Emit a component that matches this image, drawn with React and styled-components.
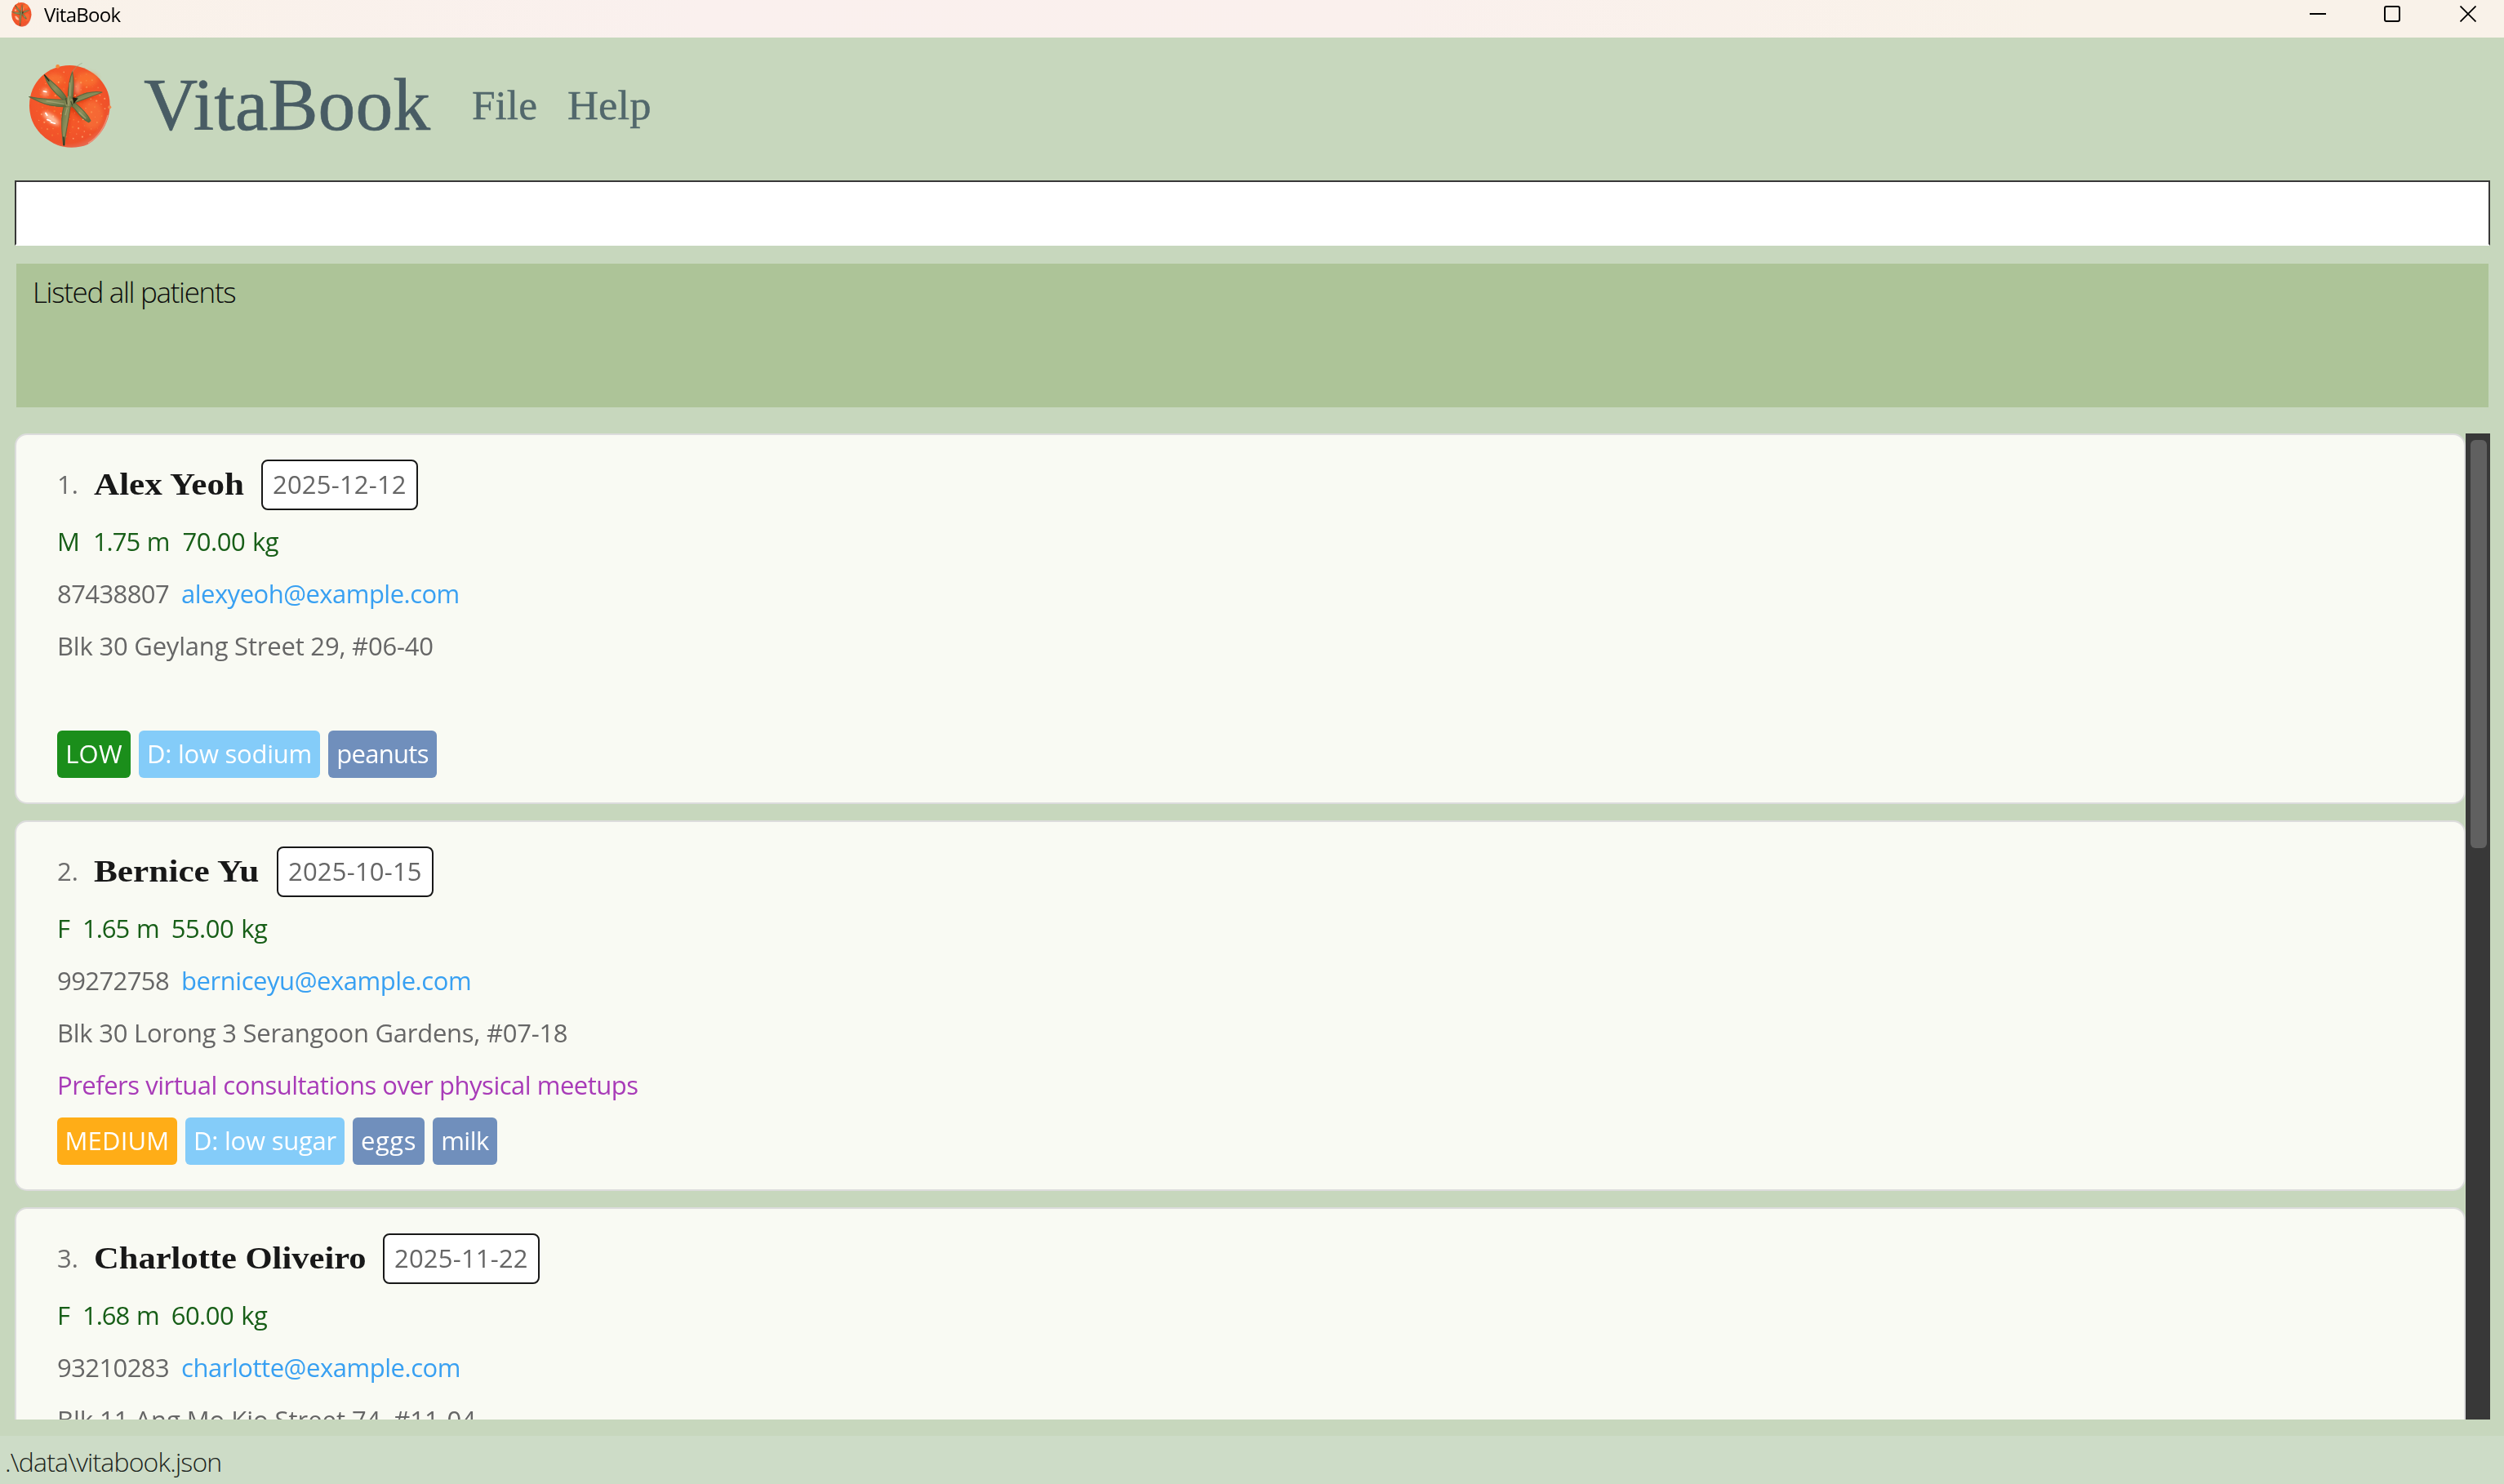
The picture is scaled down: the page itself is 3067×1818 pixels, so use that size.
import React from "react";
import styled, { createGlobalStyle } from "styled-components";

const GlobalStyle = createGlobalStyle`
  * { box-sizing: border-box; }
  body { margin: 0; background: #c7d7bd; overflow: hidden; }
`;

const sans = `"Open Sans", "Noto Sans", sans-serif`;
const serif = `"Liberation Serif", serif`;

const Window = styled.div`
  width: 3067px;
  height: 1818px;
  display: flex;
  flex-direction: column;
  background: #c7d7bd;
  font-family: ${sans};
  overflow: hidden;
`;

const TitleBar = styled.div`
  height: 46px;
  flex: none;
  display: flex;
  align-items: flex-start;
  padding: 2px 34px 0 14px;
  background: linear-gradient(90deg, #f9f2e9 0%, #faf0ee 28%, #faf0ed 55%, #f9f2e9 82%);
`;

const WindowTitle = styled.div`
  flex: 1;
  margin-left: 15px;
  font-size: 24px;
  line-height: 32px;
  letter-spacing: -0.75px;
  color: #000;
`;

const WindowButtons = styled.div`
  display: flex;
  gap: 71px;
  margin-top: 5px;
  svg { display: block; width: 20px; height: 20px; }
  svg:last-child { margin-left: 2px; }
`;

const MenuBar = styled.div`
  height: 166px;
  flex: none;
  margin-bottom: 9px;
  padding-left: 35px;
  display: flex;
  align-items: center;
  font-family: ${serif};
`;

const Stretched = styled.span`
  display: inline-block;
  transform: scaleX(${(p) => p.$by});
  transform-origin: left;
  white-space: nowrap;
`;

const Brand = styled.div`
  width: 402px;
  margin-left: 39px;
  font-size: 90px;
  line-height: 100px;
  color: #485c64;
  -webkit-text-stroke: 0.6px #485c64;
`;

const MenuItem = styled.div`
  width: ${(p) => p.$width}px;
  font-size: 50px;
  line-height: 60px;
  color: #52686c;
  -webkit-text-stroke: 0.4px #52686c;
`;

const CommandInput = styled.div`
  height: 80px;
  flex: none;
  margin: 0 17px 0 18px;
  background: #fff;
  border: 2px solid #383838;
  border-bottom-color: #fff;
`;

const ResultBox = styled.div`
  height: 176px;
  flex: none;
  margin: 22px 19px 32px 20px;
  padding: 9px 20px;
  background: #adc498;
  color: #0c0c0c;
  font-size: 35px;
  font-weight: 300;
  line-height: 51px;
  letter-spacing: -1.32px;
`;

const ListPane = styled.div`
  height: 1208px;
  flex: none;
  margin: 0 17px 20px 18px;
  display: flex;
  overflow: hidden;
`;

const Cards = styled.div`
  flex: 1;
  display: flex;
  flex-direction: column;
  gap: 20px;
`;

const ScrollTrack = styled.div`
  width: 30px;
  padding: 8px 4px 0 6px;
  background: #383838;
`;

const ScrollThumb = styled.div`
  height: 500px;
  border-radius: 6px;
  background: #606060;
`;

const Card = styled.div`
  height: 454px;
  flex: none;
  padding: 30px 50px;
  border: 2px solid #dcdcdc;
  border-radius: 15px;
  background: #f9faf3;
`;

const CardHeader = styled.div`
  height: 62px;
  margin-bottom: 6px;
  display: flex;
`;

const Index = styled.div`
  width: 45px;
  font-size: 31px;
  line-height: 60px;
  color: #6c6c6c;
`;

const Name = styled.div`
  width: ${(p) => p.$width}px;
  font-family: ${serif};
  font-size: 37px;
  font-weight: 700;
  line-height: 61px;
  color: #181818;
`;

const DateBox = styled.div`
  width: 192px;
  height: 62px;
  padding-left: 12px;
  border: 2px solid #181818;
  border-radius: 8px;
  background: #fff;
  font-size: 31px;
  line-height: 56px;
  letter-spacing: 0.2px;
  color: #666;
`;

const Line = styled.div`
  height: 64px;
  display: flex;
  gap: ${(p) => p.$gap || 15}px;
  font-size: 31px;
  line-height: 64px;
  white-space: pre;
  color: ${(p) => p.$color};
`;

const Text = styled.span`
  letter-spacing: ${(p) => p.$ls || 0}px;
  word-spacing: ${(p) => p.$ws || 0}px;
  color: ${(p) => p.$color || "inherit"};
`;

const Tags = styled.div`
  margin-top: 8px;
  display: flex;
  gap: 10px;
`;

const tagColors = { low: "#1b8e1b", medium: "#ffad17", diet: "#84ccf9", allergy: "#708fbc" };

const Tag = styled.div`
  width: ${(p) => p.$width}px;
  height: 58px;
  border-radius: 6px;
  background: ${(p) => tagColors[p.$kind]};
  color: #fff;
  font-size: 31px;
  line-height: 56px;
  text-align: center;
  white-space: nowrap;
  letter-spacing: ${(p) => p.$ls}px;
`;

const StatusBar = styled.div`
  flex: 1;
  padding-left: 6px;
  background: #cddcc7;
  color: #1c241c;
  font-size: 32px;
  font-weight: 300;
  line-height: 64px;
  letter-spacing: -0.84px;
`;

const Logo = styled.svg`
  display: block;
  flex: none;
  width: ${(p) => p.$w}px;
  height: ${(p) => p.$h}px;
`;

const speckles = Array.from({ length: 110 }, (_, i) => {
  const a = i * 2.39996 + (i % 7) * 0.3;
  const r = 12.6 * Math.sqrt(i + 0.5);
  return [197 + Math.cos(a) * r, 207 + Math.sin(a) * r, 0.8 + ((i * 7) % 5) * 0.5, i % 3];
});

function Tomato({ w, h, id }) {
  return (
    <Logo $w={w} $h={h} viewBox="45 48 306 314" preserveAspectRatio="none">
      <defs>
        <radialGradient id={`${id}-skin`} cx="0.45" cy="0.42" r="0.6">
          <stop offset="0" stopColor="#f65a24" />
          <stop offset="0.6" stopColor="#f4572a" />
          <stop offset="0.88" stopColor="#ef512a" />
          <stop offset="1" stopColor="#e86a50" />
        </radialGradient>
        <linearGradient id={`${id}-leaf`} x1="0" y1="0" x2="1" y2="1">
          <stop offset="0" stopColor="#66703f" />
          <stop offset="0.5" stopColor="#8d8f5c" />
          <stop offset="1" stopColor="#55673b" />
        </linearGradient>
        <filter id={`${id}-soft`} x="-50%" y="-50%" width="200%" height="200%">
          <feGaussianBlur stdDeviation="6" />
        </filter>
      </defs>
      <path d="M196 57 C262 57 344 112 344 202 C344 260 312 318 262 347 C228 362 178 362 148 348 C84 318 48 268 48 204 C48 118 116 57 196 57Z" fill={`url(#${id}-skin)`} />
      <path d="M336 240 C326 284 298 322 264 342" fill="none" stroke="#f0a088" strokeWidth="4" opacity="0.8" />
      <circle cx="152" cy="61" r="7" fill="#f28a3c" />
      <circle cx="343" cy="210" r="6" fill="#f28a4c" />
      <g filter={`url(#${id}-soft)`}>
        <ellipse cx="140" cy="108" rx="34" ry="20" fill="#fa7d38" opacity="0.6" />
        <ellipse cx="260" cy="108" rx="40" ry="26" fill="#fb7d33" opacity="0.6" />
        <ellipse cx="225" cy="140" rx="7" ry="22" fill="#ffb59a" opacity="0.7" />
        <ellipse cx="128" cy="252" rx="36" ry="13" transform="rotate(38 128 252)" fill="#ffd2b4" opacity="0.85" />
        <ellipse cx="106" cy="156" rx="12" ry="15" fill="#ffb692" opacity="0.8" />
        <ellipse cx="280" cy="240" rx="38" ry="52" fill="#fb8042" opacity="0.45" />
        <path d="M180 206 L180 345 L198 220 L262 268 L218 200 L300 167 L222 168 L212 90 L186 165Z" fill="#c92306" opacity="0.6" />
      </g>
      {speckles.map(([x, y, r, k], i) => (
        <circle key={i} cx={x} cy={y} r={r + 0.6} fill={["#f9a05a", "#f6853c", "#ffc48a"][k]} opacity="0.6" />
      ))}
      <path d="M114 256 l12 5 M128 266 l14 4 M108 232 l5 8 M100 152 l10 2" stroke="#fff" strokeWidth="5" strokeLinecap="round" />
      <g fill={`url(#${id}-leaf)`} stroke="#5c6840" strokeWidth="3" strokeLinejoin="round">
        <path d="M188 184 C172 150 142 128 103 92 C112 126 139 158 175 186Z" />
        <path d="M190 178 C191 145 193 112 206 80 C211 110 211 146 206 180Z" />
        <path d="M208 197 C232 186 278 171 315 156 C278 150 236 161 213 182Z" />
        <path d="M200 204 C220 214 227 245 266 266 L273 260 C262 234 236 212 212 192Z" />
        <path d="M176 205 C162 250 166 300 173 350 L177 350 C180 305 193 255 198 208Z" />
        <path d="M182 183 C150 184 90 180 47 172 C78 188 112 208 182 209Z" />
        <circle cx="194" cy="193" r="17" stroke="none" />
      </g>
      <path d="M208 175 L227 178 L210 199Z" fill="#1c1d10" />
      <path d="M206 82 C212 68 225 57 242 49" fill="none" stroke="#8fa582" strokeWidth="2" />
      <path d="M104 93 L120 114 M174 320 L175 349" stroke="#22261a" strokeWidth="4" strokeLinecap="round" />
      <path d="M110 188 L176 199 M190 170 L193 206 M180 240 L187 212 M196 120 L198 170 M230 228 L256 252" stroke="#b5b184" strokeWidth="4" opacity="0.6" />
      <path d="M182 178 L186 200 M200 188 L206 204" stroke="#34361f" strokeWidth="4" opacity="0.7" />
    </Logo>
  );
}

const patients = [
  {
    name: "Alex Yeoh", nameWidth: 205, nameScale: 1.165, date: "2025-12-12",
    sex: "M", height: "1.75 m", weight: "70.00 kg",
    phone: "87438807", email: "alexyeoh@example.com", emailLs: -0.52,
    address: "Blk 30 Geylang Street 29, #06-40", addressLs: -0.2,
    tags: [["LOW", "low", 90, 0.2], ["D: low sodium", "diet", 222, -0.23], ["peanuts", "allergy", 133, -0.7]],
  },
  {
    name: "Bernice Yu", nameWidth: 224, nameScale: 1.17, date: "2025-10-15",
    sex: "F", height: "1.65 m", weight: "55.00 kg",
    phone: "99272758", email: "berniceyu@example.com", emailLs: -0.45,
    address: "Blk 30 Lorong 3 Serangoon Gardens, #07-18", addressLs: -0.25,
    note: "Prefers virtual consultations over physical meetups",
    tags: [["MEDIUM", "medium", 147, 0.2], ["D: low sugar", "diet", 195, -0.23], ["eggs", "allergy", 88, 0.5], ["milk", "allergy", 79, -0.5]],
  },
  {
    name: "Charlotte Oliveiro", nameWidth: 354, nameScale: 1.15, date: "2025-11-22",
    sex: "F", height: "1.68 m", weight: "60.00 kg",
    phone: "93210283", email: "charlotte@example.com", emailLs: -0.46,
    address: "Blk 11 Ang Mo Kio Street 74, #11-04", addressLs: -0.04,
    tags: [],
  },
];

function PatientCard({ index, p }) {
  return (
    <Card>
      <CardHeader>
        <Index>{index}.</Index>
        <Name $width={p.nameWidth}><Stretched $by={p.nameScale}>{p.name}</Stretched></Name>
        <DateBox>{p.date}</DateBox>
      </CardHeader>
      <Line $color="#175e17" $gap={p.sex === "M" ? 16 : 15}>
        <Text>{p.sex}</Text>
        <Text $ls={-1} $ws={1.6}>{p.height}</Text>
        <Text $ls={-0.5} $ws={1.4}>{p.weight}</Text>
      </Line>
      <Line $color="#666">
        <Text $ls={-0.6}>{p.phone}</Text>
        <Text $color="#38a0f2" $ls={p.emailLs}>{p.email}</Text>
      </Line>
      <Line $color="#666"><Text $ls={p.addressLs}>{p.address}</Text></Line>
      <Line $color="#a83bb8">{p.note && <Text $ls={-0.49}>{p.note}</Text>}</Line>
      <Tags>
        {p.tags.map(([label, kind, width, ls]) => (
          <Tag key={label} $kind={kind} $width={width} $ls={ls}>{label}</Tag>
        ))}
      </Tags>
    </Card>
  );
}

export default function App() {
  return (
    <Window>
      <GlobalStyle />
      <TitleBar>
        <Tomato id="small" w={25} h={31} />
        <WindowTitle>VitaBook</WindowTitle>
        <WindowButtons>
          <svg viewBox="0 0 20 20"><path d="M0 10h20" stroke="#000" strokeWidth="2" /></svg>
          <svg viewBox="0 0 20 20"><rect x="1" y="1" width="18" height="18" rx="2" fill="none" stroke="#000" strokeWidth="2" /></svg>
          <svg viewBox="0 0 20 20"><path d="M.5 .5l19 19M19.500 .5l-19 19" stroke="#000" strokeWidth="1.8" /></svg>
        </WindowButtons>
      </TitleBar>
      <MenuBar>
        <Tomato id="logo" w={102} h={105} />
        <Brand><Stretched $by={1.019}>VitaBook</Stretched></Brand>
        <MenuItem $width={117}><Stretched $by={1.028}>File</Stretched></MenuItem>
        <MenuItem $width={110}><Stretched $by={1.055}>Help</Stretched></MenuItem>
      </MenuBar>
      <CommandInput />
      <ResultBox>Listed all patients</ResultBox>
      <ListPane>
        <Cards>
          {patients.map((p, i) => <PatientCard key={p.name} index={i + 1} p={p} />)}
        </Cards>
        <ScrollTrack><ScrollThumb /></ScrollTrack>
      </ListPane>
      <StatusBar>{".\\data\\vitabook.json"}</StatusBar>
    </Window>
  );
}
